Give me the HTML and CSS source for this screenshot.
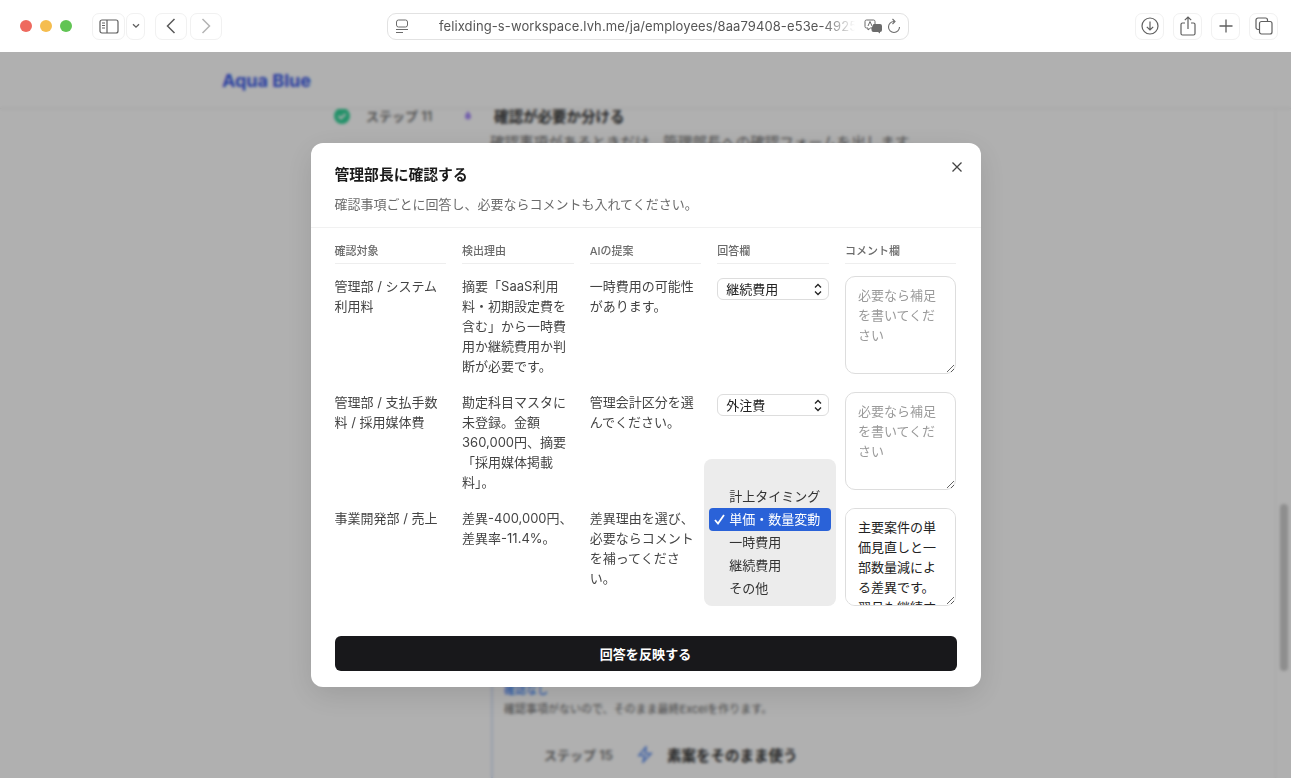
FILE: index.html
```html
<!DOCTYPE html>
<html lang="ja">
<head>
    <meta charset="UTF-8">
    <meta name="viewport" content="width=device-width, initial-scale=1.0">
    <title>Aqua Blue</title>
    <link rel="stylesheet" href="styles.css">
</head>
<body>
    <!-- Browser toolbar -->
    <header class="toolbar">
        <div class="traffic">
            <span class="light red"></span>
            <span class="light yellow"></span>
            <span class="light green"></span>
        </div>
        <div class="tool-group">
            <button class="tool tool-sidebar" type="button">
                <svg width="20" height="15" viewBox="0 0 20 15" fill="none" stroke="#5f5f5f" stroke-width="1.2"><rect x="1" y="1" width="18" height="13" rx="2"/><path d="M8 1v13"/><path d="M3 4h3M3 6.5h3M3 9h3" stroke-width="1"/></svg>
            </button>
            <button class="tool tool-menu" type="button">
                <svg width="8" height="6" viewBox="0 0 8 6" fill="none" stroke="#5f5f5f" stroke-width="1.3"><path d="M1 1.2l3 3 3-3"/></svg>
            </button>
        </div>
        <div class="tool-group nav-group">
            <button class="tool tool-nav" type="button">
                <svg width="10" height="16" viewBox="0 0 10 16" fill="none" stroke="#5a5a5a" stroke-width="1.5"><path d="M8.5 1L1.5 8l7 7"/></svg>
            </button>
            <button class="tool tool-nav" type="button">
                <svg width="10" height="16" viewBox="0 0 10 16" fill="none" stroke="#b4b4b4" stroke-width="1.5"><path d="M1.5 1l7 7-7 7"/></svg>
            </button>
        </div>
        <div class="address">
            <svg class="address-page" width="14" height="15" viewBox="0 0 14 15" fill="none" stroke="#6b6b6b" stroke-width="1"><rect x="1.5" y="1" width="11" height="7" rx="2"/><path d="M1 10.500h12M1 13.500h7"/></svg>
            <span class="address-text">felixding-s-workspace.lvh.me/ja/employees/8aa79408-e53e-4925-b</span>
            <svg class="address-translate" width="19" height="15" viewBox="0 0 19 15" fill="none" stroke="#6b6b6b" stroke-width="1"><path d="M2.500 1h7a1.500 1.500 0 0 1 1.500 1.500v5a1.500 1.500 0 0 1-1.500 1.500h-3L4 11V9H2.500A1.500 1.500 0 0 1 1 7.500v-5A1.500 1.500 0 0 1 2.500 1z"/><path d="M4 7l2-4.500L8 7"/><path d="M9.500 5h6.500a2 2 0 0 1 2 2v4a2 2 0 0 1-2 2v1.500L14 13h-4.500a2 2 0 0 1-2-2V9z" fill="#6b6b6b" stroke="none"/></svg>
            <svg width="14" height="16" viewBox="0 0 14 16" fill="none" stroke="#6b6b6b" stroke-width="1.1"><path d="M7 3.500a5.500 5.500 0 1 0 5.500 5.500"/><path d="M5.500 1l2.500 2.500L5.500 6"/></svg>
        </div>
        <div class="tool-actions">
            <button class="tool tool-action" type="button">
                <svg width="18" height="18" viewBox="0 0 18 18" fill="none" stroke="#5f5f5f" stroke-width="1.2"><circle cx="9" cy="9" r="8"/><path d="M9 4.500v8.500M5.800 9.800L9 13l3.200-3.200"/></svg>
            </button>
            <button class="tool tool-action" type="button">
                <svg width="16" height="20" viewBox="0 0 16 20" fill="none" stroke="#5f5f5f" stroke-width="1.2"><path d="M5 7H2.500A1.500 1.500 0 0 0 1 8.500v9A1.500 1.500 0 0 0 2.500 19h11a1.500 1.500 0 0 0 1.500-1.500v-9A1.500 1.500 0 0 0 13.500 7H11"/><path d="M8 13V1.200M4.800 4.200L8 1l3.200 3.200"/></svg>
            </button>
            <button class="tool tool-action" type="button">
                <svg width="14" height="14" viewBox="0 0 14 14" fill="none" stroke="#5f5f5f" stroke-width="1.3"><path d="M7 .5v13M.5 7h13"/></svg>
            </button>
            <button class="tool tool-action" type="button">
                <svg width="18" height="18" viewBox="0 0 18 18" fill="none" stroke="#5f5f5f" stroke-width="1.2"><path d="M4 12.500H3a2 2 0 0 1-2-2V3a2 2 0 0 1 2-2h7.500a2 2 0 0 1 2 2v1"/><rect x="4.500" y="4.500" width="12.500" height="12.500" rx="2"/></svg>
            </button>
        </div>
    </header>

    <div class="viewport">
        <!-- Page behind the dialog -->
        <div class="page">
            <div class="page-header">Aqua Blue</div>
            <main class="page-main">
                <div class="step step-current">
                    <svg class="step-icon" width="16" height="16" viewBox="0 0 16 16"><circle cx="8" cy="8" r="8" fill="#34d399"/><path d="M4.500 8l2.500 2.500 4.500-4.500" fill="none" stroke="#fff" stroke-width="1.800"/></svg>
                    <span class="step-label">ステップ 11</span>
                    <svg class="step-drop" width="8" height="10" viewBox="0 0 8 10"><path d="M4 0c1.500 2 3 3.500 3 5.500a3 3 0 0 1-6 0C1 3.500 2.500 2 4 0z" fill="#a78bfa"/></svg>
                    <span class="step-title">確認が必要か分ける</span>
                </div>
                <p class="step-desc">確認事項があるときだけ、管理部長への確認フォームを出します。</p>
                <div class="timeline">
                    <div class="branch-name">確認なし</div>
                    <p class="branch-desc">確認事項がないので、そのまま最終Excelを作ります。</p>
                    <div class="step step-next">
                        <span class="step-label">ステップ 15</span>
                        <svg class="step-bolt" width="16" height="17" viewBox="0 0 16 17" fill="none" stroke="#5b8def" stroke-width="1.600"><path d="M9 1L2 9.500h5.500L6 16l8-8.500H8.500z"/></svg>
                        <span class="step-title">素案をそのまま使う</span>
                    </div>
                </div>
            </main>
            <div class="page-scroll"><div class="page-thumb"></div></div>
        </div>

        <!-- Dialog -->
        <div class="overlay">
            <div class="modal">
                <div class="modal-head">
                    <h2 class="modal-title">管理部長に確認する</h2>
                    <p class="modal-desc">確認事項ごとに回答し、必要ならコメントも入れてください。</p>
                    <button class="modal-close" type="button">
                        <svg width="10" height="10" viewBox="0 0 10 10" fill="none" stroke="#444" stroke-width="1.300"><path d="M.5.500l9 9M9.500.500l-9 9"/></svg>
                    </button>
                </div>
                <div class="modal-body">
                    <div class="grid grid-head">
                        <div class="th">確認対象</div>
                        <div class="th">検出理由</div>
                        <div class="th">AIの提案</div>
                        <div class="th">回答欄</div>
                        <div class="th">コメント欄</div>
                    </div>
                    <div class="grid grid-rows">
                        <div class="td">管理部 / システム利用料</div>
                        <div class="td">摘要「SaaS利用料・初期設定費を含む」から一時費用か継続費用か判断が必要です。</div>
                        <div class="td">一時費用の可能性があります。</div>
                        <div class="td">
                            <div class="select">継続費用
                                <svg width="8" height="13" viewBox="0 0 8 13" fill="none" stroke="#222" stroke-width="1.300"><path d="M1 4.500l3-3 3 3M1 8.500l3 3 3-3"/></svg>
                            </div>
                        </div>
                        <div class="td"><textarea class="comment" placeholder="必要なら補足を書いてください"></textarea></div>

                        <div class="td">管理部 / 支払手数料 / 採用媒体費</div>
                        <div class="td">勘定科目マスタに未登録。金額360,000円、摘要「採用媒体掲載料」。</div>
                        <div class="td">管理会計区分を選んでください。</div>
                        <div class="td">
                            <div class="select">外注費
                                <svg width="8" height="13" viewBox="0 0 8 13" fill="none" stroke="#222" stroke-width="1.300"><path d="M1 4.500l3-3 3 3M1 8.500l3 3 3-3"/></svg>
                            </div>
                        </div>
                        <div class="td"><textarea class="comment" placeholder="必要なら補足を書いてください"></textarea></div>

                        <div class="td">事業開発部 / 売上</div>
                        <div class="td">差異-400,000円、差異率-11.4%。</div>
                        <div class="td">差異理由を選び、必要ならコメントを補ってください。</div>
                        <div class="td td-open">
                            <div class="popup">
                                <div class="popup-item">計上タイミング</div>
                                <div class="popup-item selected">
                                    <svg class="popup-check" width="11" height="11" viewBox="0 0 11 11" fill="none" stroke="#fff" stroke-width="1.800"><path d="M1 6l3 3.500L10 1"/></svg>
                                    単価・数量変動
                                </div>
                                <div class="popup-item">一時費用</div>
                                <div class="popup-item">継続費用</div>
                                <div class="popup-item">その他</div>
                            </div>
                        </div>
                        <div class="td"><textarea class="comment comment-filled">主要案件の単価見直しと一部数量減による差異です。翌月も継続する見込みです。単価の改定は来期の計画にも反映します。数量については追加の確認を進めています。</textarea></div>
                    </div>
                </div>
                <div class="modal-foot">
                    <button class="submit" type="button">回答を反映する</button>
                </div>
            </div>
        </div>
    </div>
</body>
</html>
```

FILE: styles.css
```css
* {
    box-sizing: border-box;
}
html, body {
    height: 100%;
}
body {
    margin: 0;
    display: flex;
    flex-direction: column;
    overflow: hidden;
    background-color: #fff;
    color: #222;
    font-family: Inter, "Noto Sans CJK JP", sans-serif;
}
button {
    font-family: inherit;
    cursor: pointer;
}

/* Toolbar */
.toolbar {
    height: 52px;
    flex: none;
    display: flex;
    align-items: center;
    padding: 0 13px 0 20px;
    background-color: #fff;
}
.traffic {
    display: flex;
    gap: 8px;
    margin-right: 20px;
}
.light {
    width: 12px;
    height: 12px;
    border-radius: 50%;
}
.red { background-color: #ee6a5f; }
.yellow { background-color: #f5bd4f; }
.green { background-color: #61c454; }
.tool-group {
    display: flex;
    gap: 1px;
}
.nav-group {
    margin-left: 10px;
    gap: 3px;
}
.tool {
    height: 27px;
    padding: 0;
    display: flex;
    align-items: center;
    justify-content: center;
    background-color: #fff;
    border: 1px solid #f1f1f1;
    border-radius: 7px;
}
.tool-sidebar { width: 33px; }
.tool-menu { width: 19px; }
.tool-nav { width: 32px; }
.address {
    width: 522px;
    height: 27px;
    margin-left: 165px;
    display: flex;
    align-items: center;
    padding: 0 4px 0 7px;
    border: 1px solid #e2e2e2;
    border-radius: 9px;
}
.address-page {
    flex: none;
    margin-right: 30px;
}
.address-text {
    width: 416px;
    flex: none;
    overflow: hidden;
    white-space: nowrap;
    font-size: 13px;
    letter-spacing: 0.1px;
    color: #555;
    -webkit-mask-image: linear-gradient(to right, #000 92%, transparent 100%);
    mask-image: linear-gradient(to right, #000 92%, transparent 100%);
}
.address-translate {
    margin: 0 4px 0 9px;
    flex: none;
}
.tool-actions {
    margin-left: auto;
    display: flex;
    gap: 9px;
}
.tool-action { width: 29px; }

/* Page behind the dialog */
.viewport {
    flex: 1;
    position: relative;
    overflow: hidden;
}
.page {
    height: 100%;
    display: flex;
    flex-direction: column;
    background-color: #fff;
}
.page-header {
    height: 57px;
    flex: none;
    display: flex;
    align-items: center;
    padding-left: 222px;
    border-bottom: 1px solid #eee;
    font-size: 18px;
    font-weight: 700;
    color: #3a5ae8;
}
.page-main {
    flex: 1;
    overflow: hidden;
}
.step {
    display: flex;
    align-items: center;
}
.step-current {
    margin: -4px 0 0 334px;
}
.step-label {
    font-size: 13px;
    font-weight: 600;
    color: #777;
}
.step-current .step-label {
    margin-left: 16px;
    width: 94px;
}
.step-drop {
    margin: 0 22px 0 4px;
}
.step-title {
    font-size: 14.500px;
    font-weight: 700;
    color: #333;
}
.step-desc {
    margin: 5px 0 0 490px;
    font-size: 14.500px;
    color: #666;
}
.timeline {
    margin: 530px 0 0 491px;
    padding: 0 0 30px 11px;
    border-left: 2px solid #dbe6fb;
}
.branch-name {
    font-size: 11px;
    line-height: 16px;
    font-weight: 500;
    color: #3b82f6;
}
.branch-desc {
    margin: 3px 0 0;
    font-size: 11px;
    line-height: 16px;
    color: #666;
}
.step-next {
    margin: 27px 0 0 40px;
}
.step-next .step-label {
    width: 94px;
}
.step-bolt {
    margin: 0 14px 0 -1px;
}
.page-scroll {
    position: absolute;
    top: 57px;
    right: 0;
    bottom: 0;
    width: 16px;
    padding-left: 4px;
    border-left: 1px solid #f3f3f3;
}
.page-thumb {
    width: 8px;
    height: 167px;
    margin-top: 395px;
    border-radius: 4px;
    background-color: #cecece;
}

/* Dialog */
.overlay {
    position: absolute;
    inset: 0;
    display: flex;
    align-items: center;
    justify-content: center;
    background-color: rgba(0, 0, 0, 0.31);
    -webkit-backdrop-filter: blur(1.500px);
    backdrop-filter: blur(1.500px);
}
.modal {
    width: 670px;
    height: 544px;
    background-color: #fff;
    border-radius: 12px;
    box-shadow: 0 8px 30px rgba(0, 0, 0, 0.12);
}
.modal-head {
    position: relative;
    padding: 21px 24px 13px;
    border-bottom: 1px solid #f1f1f1;
}
.modal-title {
    margin: 0;
    font-size: 14.800px;
    line-height: 22px;
    font-weight: 600;
    color: #1a1a1a;
}
.modal-desc {
    margin: 8px 0 0;
    font-size: 13px;
    line-height: 20px;
    color: #6b6b6b;
}
.modal-close {
    position: absolute;
    top: 14px;
    right: 14px;
    width: 20px;
    height: 20px;
    padding: 0;
    display: flex;
    align-items: center;
    justify-content: center;
    border: none;
    background: none;
}
.modal-body {
    padding: 15px 24px 0;
}
.grid {
    display: grid;
    grid-template-columns: repeat(5, 1fr);
    column-gap: 16px;
}
.grid-head {
    margin-bottom: 12px;
}
.th {
    padding-bottom: 4px;
    border-bottom: 1px solid #eee;
    font-size: 11px;
    line-height: 16px;
    font-weight: 500;
    color: #6b6b6b;
}
.grid-rows {
    row-gap: 16px;
}
.td {
    font-size: 13px;
    line-height: 20px;
    color: #444;
    min-width: 0;
}
.td-open {
    position: relative;
}
.select {
    height: 22px;
    margin-top: 2px;
    display: flex;
    align-items: center;
    justify-content: space-between;
    padding: 0 6px 0 8px;
    background-color: #fff;
    border: 1px solid #ddd;
    border-radius: 6px;
    color: #222;
}
.comment {
    display: block;
    width: 100%;
    height: 98px;
    padding: 8px 12px;
    background-color: #fff;
    border: 1px solid #ddd;
    border-radius: 10px;
    outline: none;
    font-family: inherit;
    font-size: 13px;
    line-height: 20px;
    color: #222;
    resize: vertical;
}
.comment::placeholder {
    color: #9a9a9a;
}
.comment-filled {
    overflow-y: scroll;
}
.comment-filled::-webkit-scrollbar {
    width: 14px;
}
.comment-filled::-webkit-scrollbar-track {
    background-color: #fafafa;
    border-left: 1px solid #ededed;
}
.comment-filled::-webkit-scrollbar-thumb {
    background-color: #b8b8b8;
    background-clip: content-box;
    border: 3px solid transparent;
    border-left-width: 4px;
    border-radius: 6px;
}
.comment-filled::-webkit-scrollbar-corner {
    background-color: #fafafa;
}

/* Open select menu */
.popup {
    position: absolute;
    top: -49px;
    left: -13px;
    width: 132px;
    height: 147px;
    padding: 26px 5px 5px;
    background-color: #ececec;
    border-radius: 8px;
}
.popup-item {
    position: relative;
    height: 23px;
    padding-left: 20px;
    font-size: 13px;
    line-height: 23px;
    color: #333;
}
.popup-item.selected {
    background-color: #2a62d8;
    border-radius: 4px;
    color: #fff;
}
.popup-check {
    position: absolute;
    top: 6px;
    left: 5px;
}
.modal-foot {
    padding: 30px 24px 16px;
}
.submit {
    width: 100%;
    height: 35px;
    background-color: #18181b;
    border: none;
    border-radius: 6px;
    font-size: 13px;
    font-weight: 600;
    letter-spacing: 0.1px;
    color: #fff;
}
```
